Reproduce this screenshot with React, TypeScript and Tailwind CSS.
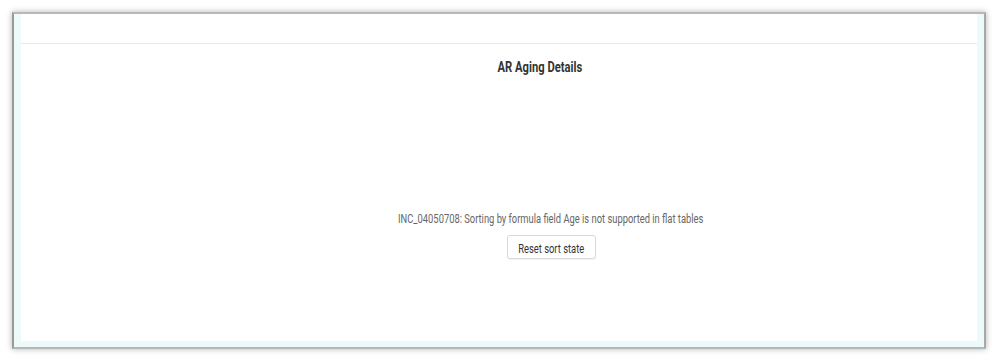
import React from "react";

function App() {
    return (
        <div className="h-[360px] w-[998px] bg-white p-[12px] pb-[11px] font-['Roboto',sans-serif]">
            <div className="flex h-full flex-col border-l-2 border-t-2 border-r-2 border-b-2 border-l-[#9a9a9a] border-t-[#b8b8b8] border-r-[#a8a8a8] border-b-[#b0b8b8] bg-[#eef9fa] px-[7px] pb-[6px] shadow-[0_0_6px_rgba(0,0,0,0.3)]">
                <div className="flex flex-1 flex-col bg-white">
                    <div className="h-[30px] border-b border-[#e9e9e9]"></div>

                    <div className="flex flex-1 flex-col items-center pl-[104px]">
                        <h2 className="mt-[13px] mr-[22px] scale-x-80 text-[14px] font-bold text-[#333]">
                            AR Aging Details
                        </h2>

                        <p className="mt-[132px] scale-x-78 whitespace-nowrap text-[12px] text-[#666]">
                            INC_04050708: Sorting by formula field Age is not supported in flat tables
                        </p>

                        <button className="mt-[7px] h-[24px] w-[89px] rounded-[3px] border border-[#d9d9d9] bg-white text-[#333] shadow-[0_1px_1px_rgba(0,0,0,0.05)]">
                            <span className="inline-block scale-x-78 whitespace-nowrap text-[12px]">Reset sort state</span>
                        </button>
                    </div>
                </div>
            </div>
        </div>
    );
}

export default App;
